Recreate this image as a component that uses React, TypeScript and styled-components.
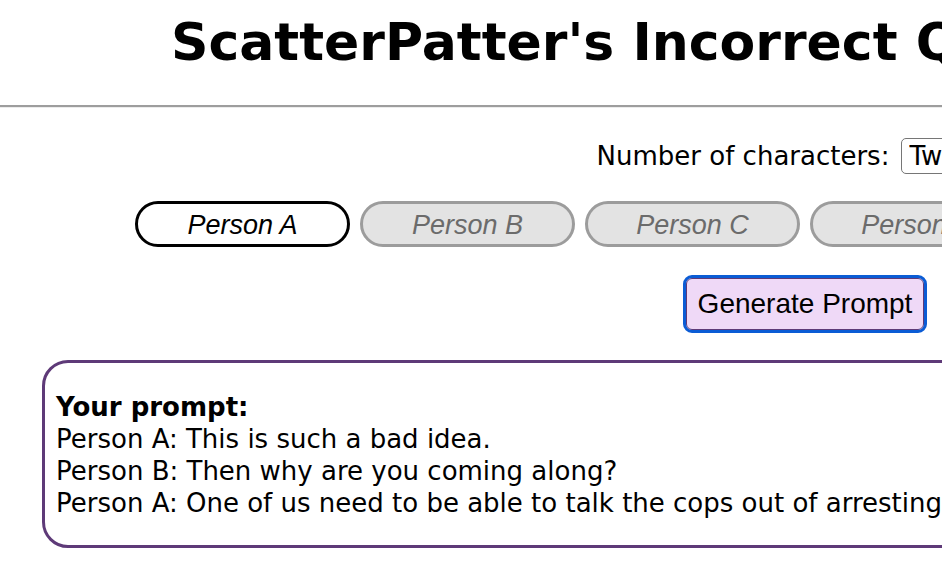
import React, { useState } from 'react';
import styled, { createGlobalStyle } from 'styled-components';

const GlobalStyle = createGlobalStyle`
  body {
    margin: 0;
    background: #ffffff;
    color: #000000;
    font-family: 'DejaVu Sans', Verdana, sans-serif;
    font-size: 26px;
  }
`;

const people = ['Person A', 'Person B', 'Person C', 'Person D', 'Person E', 'Person F'];

const prompt = [
  'Person A: This is such a bad idea.',
  'Person B: Then why are you coming along?',
  'Person A: One of us need to be able to talk the cops out of arresting us.',
];

export default function App() {
  const [active, setActive] = useState('Person A');
  const [count, setCount] = useState('2');

  return (
    <Page>
      <GlobalStyle />
      <Title>ScatterPatter's Incorrect Quotes Generator</Title>
      <Rule />
      <Main>
        <CountRow>
          <CountLabel htmlFor="count">Number of characters:</CountLabel>
          <CountSelect id="count" value={count} onChange={(e) => setCount(e.target.value)}>
            <option value="1">One</option>
            <option value="2">Two</option>
            <option value="3">Three</option>
            <option value="4">Four</option>
            <option value="5">Five</option>
            <option value="6">Six</option>
          </CountSelect>
        </CountRow>
        <PillRow>
          {people.map((name) => (
            <Pill key={name} $active={name === active} onClick={() => setActive(name)}>
              {name}
            </Pill>
          ))}
        </PillRow>
        <GenerateButton>Generate Prompt</GenerateButton>
        <PromptBox>
          <PromptHeading>Your prompt:</PromptHeading>
          {prompt.map((line) => (
            <PromptLine key={line}>{line}</PromptLine>
          ))}
        </PromptBox>
      </Main>
    </Page>
  );
}

const Page = styled.div`
  width: 1610px;
  display: flex;
  flex-direction: column;
`

const Title = styled.h1`
  margin: 0;
  padding-top: 12px;
  font-size: 52px;
  line-height: 60px;
  font-weight: bold;
  text-align: center;
  white-space: nowrap;
`

const Rule = styled.hr`
  margin: 33px 0 0;
  height: 0;
  border: none;
  border-top: 2px solid #9d9d9d;
  border-bottom: 1px solid #ececec;
`

const Main = styled.main`
  display: flex;
  flex-direction: column;
  align-items: center;
  padding-top: 30px;
`

const CountRow = styled.div`
  display: flex;
  align-items: center;
  gap: 12px;
  height: 36px;
`

const CountLabel = styled.label`
  font-size: 26px;
  white-space: nowrap;
`

const CountSelect = styled.select`
  width: 112px;
  height: 36px;
  padding: 0 3px;
  border: 1px solid #767676;
  border-radius: 5px;
  background: #ffffff;
  color: #000000;
  font-family: 'DejaVu Sans', Verdana, sans-serif;
  font-size: 26px;
`

const PillRow = styled.div`
  display: flex;
  gap: 10px;
  margin-top: 27px;
`

const Pill = styled.button<{ $active: boolean }>`
  width: 215px;
  height: 46px;
  padding: 2px 0 0;
  border: 3px solid ${(p) => (p.$active ? '#000000' : '#9c9c9c')};
  border-radius: 23px;
  background: ${(p) => (p.$active ? '#ffffff' : '#e3e3e3')};
  color: ${(p) => (p.$active ? '#000000' : '#6b6b6b')};
  font-family: 'Liberation Sans', Arial, sans-serif;
  font-style: italic;
  font-size: 27px;
  cursor: pointer;
`

const GenerateButton = styled.button`
  margin-top: 31px;
  height: 52px;
  padding: 0 11px;
  border: 1px solid #5e3a78;
  border-radius: 6px;
  outline: 3px solid #0b5cd5;
  background: #efd9f7;
  color: #000000;
  font-family: 'Liberation Sans', Arial, sans-serif;
  font-size: 28px;
  cursor: pointer;
`

const PromptBox = styled.section`
  box-sizing: border-box;
  width: 1526px;
  margin-top: 30px;
  padding: 28px 11px 26px;
  border: 3px solid #5e3a78;
  border-radius: 26px;
  line-height: 32px;
`

const PromptHeading = styled.div`
  font-weight: bold;
`

const PromptLine = styled.div`
  white-space: nowrap;
`
